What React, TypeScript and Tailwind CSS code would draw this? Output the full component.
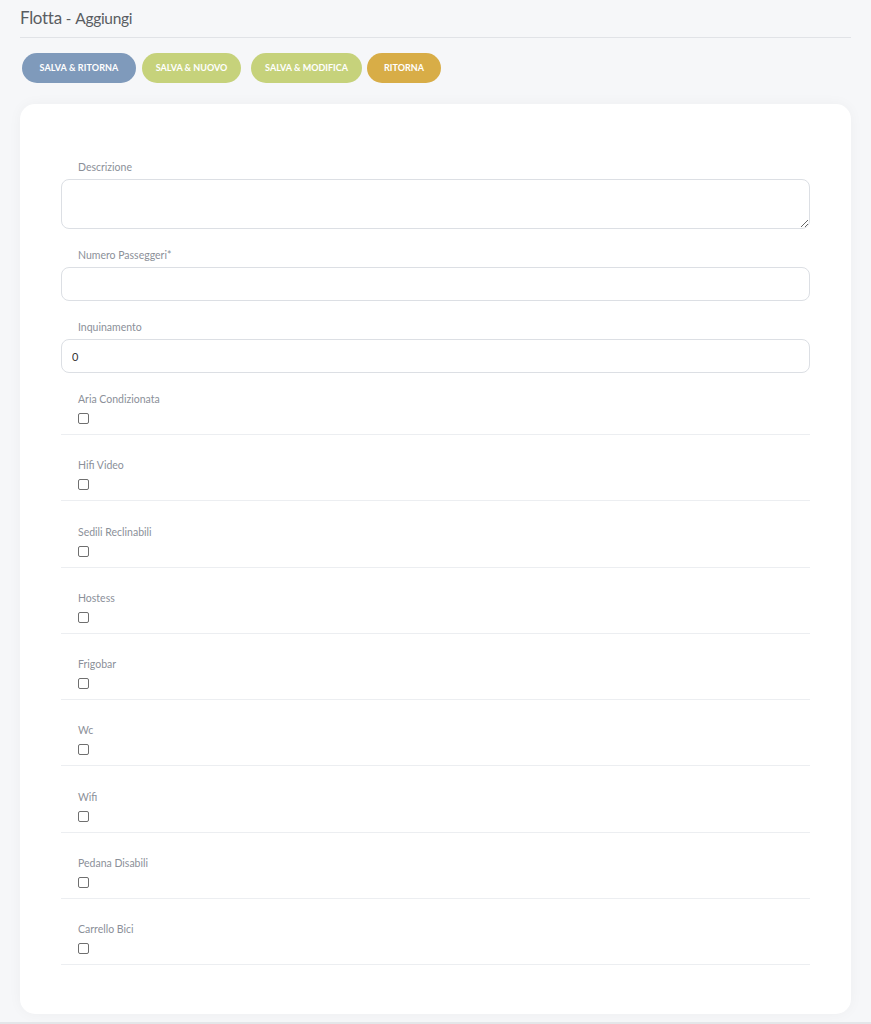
import React from 'react'

const checks = [
  'Aria Condizionata',
  'Hifi Video',
  'Sedili Reclinabili',
  'Hostess',
  'Frigobar',
  'Wc',
  'Wifi',
  'Pedana Disabili',
  'Carrello Bici',
]

const labelCls = 'block pl-[17px] text-[10.5px] leading-[14px] text-[#8b9099]'

export default function App() {
  return (
    <div
      className="min-h-screen bg-[#f6f7f9] text-[#555]"
      style={{ fontFamily: 'Lato, "Noto Sans", sans-serif' }}
    >
      <div className="px-5">
        {/* header */}
        <div className="border-b border-[#e1e3e7] pt-[7px] pb-[8px]">
          <h1 className="text-[17px] leading-[22px] tracking-[-0.3px] text-[#5a5d62]">
            Flotta <span className="text-[15px]">-</span> <span className="text-[15.5px]">Aggiungi</span>
          </h1>
        </div>

        <div className="flex items-center pt-[15px] pl-[2px]">
          <button className="h-[30px] w-[114px] rounded-full bg-[#7f9abb] text-[9px] font-bold tracking-[0.1px] text-white">
            SALVA &amp; RITORNA
          </button>
          <button className="ml-[6px] h-[30px] w-[99px] rounded-full bg-[#c6d27b] text-[9px] font-bold text-white">
            SALVA &amp; NUOVO
          </button>
          <button className="ml-[10px] h-[30px] w-[111px] rounded-full bg-[#c6d27b] text-[9px] font-bold text-white">
            SALVA &amp; MODIFICA
          </button>
          <button className="ml-[5px] h-[30px] w-[74px] rounded-full bg-[#d8ad47] text-[9px] font-bold text-white">
            RITORNA
          </button>
        </div>

        {/* card */}
        <div className="mt-[21px] rounded-[15px] bg-white px-[41px] pt-[56px] pb-[49px] shadow-[0_0_14px_rgba(0,0,0,0.04)]">
          <div className="flex flex-col gap-[19px]">
            <div>
              <label className={labelCls}>Descrizione</label>
              <textarea className="mt-[5px] block h-[50px] w-full resize-y rounded-[8px] border border-[#dcdfe4] bg-white px-[10px] text-[11px] outline-none" />
            </div>
            <div>
              <label className={labelCls}>Numero Passeggeri*</label>
              <input
                type="text"
                className="mt-[5px] block h-[34px] w-full rounded-[8px] border border-[#dcdfe4] bg-white px-[10px] text-[11px] outline-none"
              />
            </div>
            <div>
              <label className={labelCls}>Inquinamento</label>
              <input
                type="text"
                defaultValue="0"
                className="mt-[5px] block h-[34px] w-full rounded-[8px] border border-[#dcdfe4] bg-white px-[10px] text-[11px] text-[#333] outline-none"
              />
            </div>
          </div>

          <div className="mt-[19px]">
            {checks.map((c, i) => (
              <div
                key={c}
                className={`border-b border-[#eceef1] pb-[10px] ${i === 0 ? '' : 'pt-[23.25px]'}`}
              >
                <label className={labelCls}>{c}</label>
                <div className="mt-[7px] pl-[17px]">
                  <input
                    type="checkbox"
                    className="block h-[11px] w-[11px] appearance-none rounded-[2px] border border-[#6f6f6f] bg-white"
                  />
                </div>
              </div>
            ))}
          </div>
        </div>
      </div>
      <div className="mt-[8px] h-[3px] border-t-2 border-[#e4e6e9] bg-white" />
    </div>
  )
}
